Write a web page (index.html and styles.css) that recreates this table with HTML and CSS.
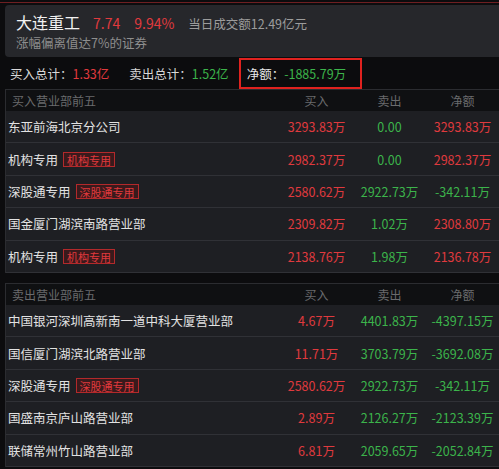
FILE: index.html
```html
<!DOCTYPE html>
<html lang="zh-CN">
<head>
    <meta charset="UTF-8">
    <title>龙虎榜 - 大连重工</title>
    <link rel="stylesheet" href="styles.css">
</head>
<body>
    <div class="topline"></div>
    <div class="head">
        <div class="title-line">
            <span class="name">大连重工</span>
            <span class="price red">7.74</span>
            <span class="pct red">9.94%</span>
            <span class="turnover">当日成交额12.49亿元</span>
        </div>
        <div class="reason">涨幅偏离值达7%的证券</div>
    </div>

    <div class="totals">
        <div class="total buy-total">买入总计：<span class="red">1.33亿</span></div>
        <div class="total sell-total">卖出总计：<span class="green">1.52亿</span></div>
        <div class="total net-box">净额：<span class="green">-1885.79万</span></div>
    </div>

    <div class="section">
        <div class="row head-row">
            <div class="cell-name">买入营业部前五</div>
            <div class="cell">买入</div>
            <div class="cell">卖出</div>
            <div class="cell">净额</div>
        </div>
        <div class="row">
            <div class="cell-name">东亚前海北京分公司</div>
            <div class="cell red">3293.83万</div>
            <div class="cell green">0.00</div>
            <div class="cell red">3293.83万</div>
        </div>
        <div class="row">
            <div class="cell-name">机构专用<span class="tag">机构专用</span></div>
            <div class="cell red">2982.37万</div>
            <div class="cell green">0.00</div>
            <div class="cell red">2982.37万</div>
        </div>
        <div class="row">
            <div class="cell-name">深股通专用<span class="tag">深股通专用</span></div>
            <div class="cell red">2580.62万</div>
            <div class="cell green">2922.73万</div>
            <div class="cell green">-342.11万</div>
        </div>
        <div class="row">
            <div class="cell-name">国金厦门湖滨南路营业部</div>
            <div class="cell red">2309.82万</div>
            <div class="cell green">1.02万</div>
            <div class="cell red">2308.80万</div>
        </div>
        <div class="row">
            <div class="cell-name">机构专用<span class="tag">机构专用</span></div>
            <div class="cell red">2138.76万</div>
            <div class="cell green">1.98万</div>
            <div class="cell red">2136.78万</div>
        </div>
    </div>

    <div class="section second">
        <div class="row head-row">
            <div class="cell-name">卖出营业部前五</div>
            <div class="cell">买入</div>
            <div class="cell">卖出</div>
            <div class="cell">净额</div>
        </div>
        <div class="row">
            <div class="cell-name">中国银河深圳高新南一道中科大厦营业部</div>
            <div class="cell red">4.67万</div>
            <div class="cell green">4401.83万</div>
            <div class="cell green">-4397.15万</div>
        </div>
        <div class="row">
            <div class="cell-name">国信厦门湖滨北路营业部</div>
            <div class="cell red">11.71万</div>
            <div class="cell green">3703.79万</div>
            <div class="cell green">-3692.08万</div>
        </div>
        <div class="row">
            <div class="cell-name">深股通专用<span class="tag">深股通专用</span></div>
            <div class="cell red">2580.62万</div>
            <div class="cell green">2922.73万</div>
            <div class="cell green">-342.11万</div>
        </div>
        <div class="row">
            <div class="cell-name">国盛南京庐山路营业部</div>
            <div class="cell red">2.89万</div>
            <div class="cell green">2126.27万</div>
            <div class="cell green">-2123.39万</div>
        </div>
        <div class="row">
            <div class="cell-name">联储常州竹山路营业部</div>
            <div class="cell red">6.81万</div>
            <div class="cell green">2059.65万</div>
            <div class="cell green">-2052.84万</div>
        </div>
    </div>
</body>
</html>
```

FILE: styles.css
```css
body {
    margin: 0;
    width: 499px;
    height: 469px;
    overflow: hidden;
    background-color: #0c0c0e;
    font-family: "Noto Sans CJK SC", "Noto Sans", sans-serif;
    color: #d8d8d8;
}
.red {
    color: #e03a3e;
}
.green {
    color: #3cb44b;
}
.topline {
    height: 1px;
    margin-top: 2px;
    background-color: #6e1f22;
}
.head {
    margin: 2px 0 0 5px;
    height: 52px;
    box-sizing: border-box;
    padding: 5px 11px;
    background-color: #26272b;
    border-radius: 4px 0 0 4px;
}
.title-line {
    display: flex;
    align-items: baseline;
    height: 24px;
}
.name {
    font-size: 16px;
    color: #f2f2f2;
    margin-right: 13px;
}
.price, .pct {
    font-size: 14px;
    margin-right: 14px;
}
.turnover {
    font-size: 12.5px;
    color: #9c9c9c;
}
.reason {
    font-size: 12.5px;
    color: #8e8e8e;
    line-height: 18px;
}
.totals {
    display: flex;
    align-items: center;
    height: 32px;
    padding-left: 10px;
    font-size: 12.5px;
}
.buy-total {
    margin-right: 20px;
}
.sell-total {
    margin-right: 10px;
}
.net-box {
    border: 2px solid #e0221f;
    height: 31px;
    box-sizing: border-box;
    display: flex;
    align-items: center;
    padding: 0 14px 0 6px;
    color: #e8e8e8;
}
.section {
    margin-left: 5px;
    border-left: 1px solid #2b2c30;
    border-top: 1px solid #2b2c30;
}
.second {
    margin-top: 10px;
}
.row {
    display: flex;
    align-items: center;
    height: 32.4px;
    box-sizing: border-box;
    background-color: #1e1f23;
    border-bottom: 1px solid #303136;
    font-size: 12.5px;
}
.head-row {
    height: 21px;
    background-color: #0f1012;
    border-bottom: none;
    font-size: 12px;
}
.head-row .cell-name {
    padding-left: 6px;
}
.cell-name {
    flex: 1;
    display: flex;
    align-items: center;
    padding-left: 2px;
    color: #e2e2e2;
    white-space: nowrap;
}
.head-row .cell-name, .head-row .cell {
    color: #6a6b6d;
}
.cell {
    width: 73px;
    text-align: center;
    white-space: nowrap;
}
.tag {
    margin-left: 5px;
    padding: 0 3px;
    height: 15px;
    line-height: 14px;
    font-size: 11px;
    color: #e0393c;
    background-color: #3a1a1c;
    border: 1px solid #b3292b;
    box-sizing: border-box;
}
```
